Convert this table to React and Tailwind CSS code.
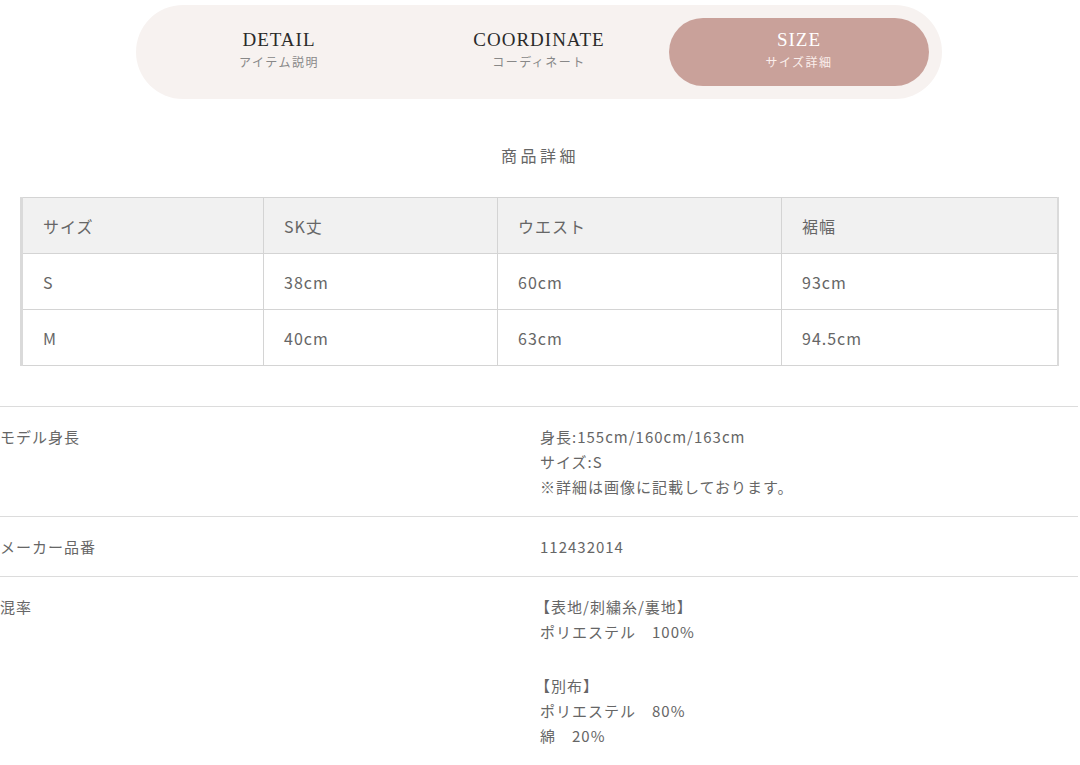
import React from 'react';

const tabs = [
  { en: 'DETAIL', ja: 'アイテム説明' },
  { en: 'COORDINATE', ja: 'コーディネート' },
  { en: 'SIZE', ja: 'サイズ詳細', active: true },
];

const rows = [
  ['S', '38cm', '60cm', '93cm'],
  ['M', '40cm', '63cm', '94.5cm'],
];

const colWidths = ['w-[242px]', 'w-[234px]', 'w-[284px]', 'w-[276px]'];

export default function App() {
  return (
    <div className="w-[1080px] h-[765px] bg-white overflow-hidden text-[#666] font-['Noto_Sans_CJK_JP',sans-serif]">
      {/* Tabs */}
      <div className="flex justify-center pt-[5px] pr-[2px]">
        <div className="flex w-[806px] h-[94px] items-center px-[13px] rounded-full bg-[#f7f2f0]">
          {tabs.map((t) => (
            <div
              key={t.en}
              className={`flex h-[68px] w-[260px] flex-col items-center justify-center pb-[5px] rounded-full ${
                t.active ? 'bg-[#c9a19a] text-white' : 'text-[#2a2a2a]'
              }`}
            >
              <span className="font-['Liberation_Serif',serif] text-[19px] leading-[22px] tracking-[1px]">
                {t.en}
              </span>
              <span
                className={`mt-[3px] text-[12px] leading-[16px] tracking-[1.5px] ${
                  t.active ? 'text-[#fbefec]' : 'text-[#888]'
                }`}
              >
                {t.ja}
              </span>
            </div>
          ))}
        </div>
      </div>

      {/* Title */}
      <h2 className="mt-[44px] text-center text-[16px] leading-[24px] tracking-[3.5px] text-[#666]">
        商品詳細
      </h2>

      {/* Size table */}
      <div className="mt-[30px] ml-[20px]">
        <table className="border-collapse border-l-[3px] border-r-[2px] border-[#dadada] text-[16px] tracking-[1px]">
          <thead>
            <tr className="bg-[#f1f1f1]">
              {['サイズ', 'SK丈', 'ウエスト', '裾幅'].map((h, i) => (
                <th
                  key={h}
                  className={`${colWidths[i]} h-[56px] border border-[#d4d4d4] pl-[20px] text-left font-normal`}
                >
                  {h}
                </th>
              ))}
            </tr>
          </thead>
          <tbody>
            {rows.map((r) => (
              <tr key={r[0]}>
                {r.map((c, i) => (
                  <td key={i} className="h-[56px] border border-[#d4d4d4] bg-white pl-[20px]">
                    {c}
                  </td>
                ))}
              </tr>
            ))}
          </tbody>
        </table>
      </div>

      {/* Spec list */}
      <div className="mt-[40px] w-[1078px] border-t border-[#dcdcdc] text-[15px] leading-[25px] tracking-[1px]">
        <div className="flex border-b border-[#dcdcdc] pt-[17px] pb-[17px]">
          <div className="w-[540px]">モデル身長</div>
          <div>
            <p>身長:155cm/160cm/163cm</p>
            <p>サイズ:S</p>
            <p>※詳細は画像に記載しております。</p>
          </div>
        </div>
        <div className="flex border-b border-[#dcdcdc] pt-[17px] pb-[17px]">
          <div className="w-[540px]">メーカー品番</div>
          <div>112432014</div>
        </div>
        <div className="flex pt-[17px] pb-[17px]">
          <div className="w-[540px]">混率</div>
          <div>
            <p className="-ml-[5px]">【表地/刺繍糸/裏地】</p>
            <p>ポリエステル　100%</p>
            <p className="h-[29px]"></p>
            <p className="-ml-[5px]">【別布】</p>
            <p>ポリエステル　80%</p>
            <p>綿　20%</p>
          </div>
        </div>
      </div>
    </div>
  );
}
